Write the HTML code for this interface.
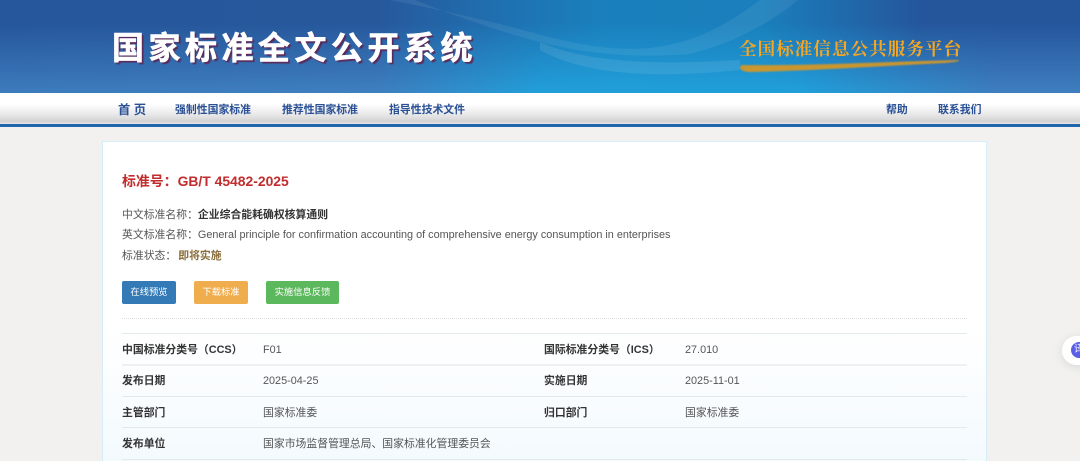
<!DOCTYPE html>
<html lang="zh"><head><meta charset="utf-8">
<style>
*{box-sizing:border-box;margin:0;padding:0}
html,body{width:1080px;height:461px;overflow:hidden;background:#f2f1ef;font-family:"Liberation Sans","Noto Sans CJK SC",sans-serif}
#wrap{position:relative;width:1080px;height:461px;overflow:hidden;background:#f2f1ef;filter:blur(.25px)}
.a{position:absolute;white-space:nowrap}
#banner{left:0;top:0;width:1080px;height:93px;overflow:hidden;background:linear-gradient(90deg,#3d7cbd 0,#3f80c0 376px,#22a0da 540px,#21a0da 800px,#3f7fc0 998px,#3f7fc0 1080px)}
#top{left:0;top:0;width:1080px;height:93px;background:linear-gradient(90deg,#26569b 0,#27589c 376px,#1f70b0 500px,#1a80bd 600px,#1a7fbc 760px,#25569c 920px,#25569c 1080px);-webkit-mask-image:linear-gradient(180deg,#000 0,#000 25%,transparent 100%);mask-image:linear-gradient(180deg,#000 0,#000 25%,transparent 100%)}
#nav{left:0;top:93px;width:1080px;height:31px;background:linear-gradient(180deg,#fff 0,#fff 35%,#e8e8e8 70%,#d2d2d2 92%,#e6e6e6 100%)}
#line{left:0;top:124px;width:1080px;height:3px;background:#1f66ac}
.n{top:102px;font-size:10.87px;line-height:16px;font-weight:bold;color:#2a5095}
#card{left:102px;top:141px;width:885px;height:340px;border:1px solid #d6ecf8;background:linear-gradient(180deg,#fff 0,#fff 55%,#f3fafe 94%)}
.t{font-size:10.85px;line-height:16px;color:#555}
.b{font-weight:bold;color:#333}
.btn{top:281px;height:23px;border-radius:2px;color:#fff;font-size:9.3px;line-height:23px;text-align:center}
.hr{left:122px;width:845px;height:1px;background:#e6e9ec}
.k{font-size:10.85px;line-height:16px;font-weight:bold;color:#333}
.v{font-size:10.85px;line-height:16px;color:#555}
</style></head><body>
<div id="wrap">
<div class="a" id="banner">
<div class="a" id="top"></div>
<svg class="a" style="left:0;top:0" width="1080" height="93" viewBox="0 0 1080 93">
<path d="M390 0H415C450 14 500 32 540 42C590 55 640 58 690 54C730 44 770 24 798 0H760C730 22 700 42 650 48C600 52 560 40 500 24C460 14 420 6 390 0Z" fill="#fff" opacity=".07"/>
<path d="M540 42C580 60 640 66 740 60V70C640 80 580 72 540 50Z" fill="#fff" opacity=".09"/>
<path d="M742 65C800 66 880 62 958 60C962 61 955 62 945 63C880 66 810 71 750 72C740 72 738 67 742 65Z" fill="#c9962f" style="filter:blur(.8px)"/>
</svg>
<div class="a" style="left:112px;top:28px;font-size:32px;line-height:40px;font-weight:bold;letter-spacing:4.5px;color:#fff;-webkit-text-stroke:.6px #fff;text-shadow:2px 2px 1px #5a2a5a">国家标准全文公开系统</div>
<div class="a" style="left:739px;top:37px;font-family:'Noto Serif CJK SC',serif;font-size:17.5px;line-height:24px;letter-spacing:1.1px;font-weight:bold;color:#f5a623">全国标准信息公共服务平台</div>
</div>
<div class="a" id="nav"></div>
<div class="a" id="line"></div>
<div class="a n" style="left:118px;font-size:12.3px;line-height:18px;top:101px">首 页</div>
<div class="a n" style="left:175px">强制性国家标准</div>
<div class="a n" style="left:282px">推荐性国家标准</div>
<div class="a n" style="left:389px">指导性技术文件</div>
<div class="a n" style="left:886px">帮助</div>
<div class="a n" style="left:938px">联系我们</div>

<div class="a" id="card"></div>
<div class="a" style="left:122px;top:171px;font-size:13.9px;line-height:20px;font-weight:bold;color:#c12c2c">标准号：GB/T 45482-2025</div>
<div class="a t" style="left:122px;top:207px">中文标准名称：<span class="b">企业综合能耗确权核算通则</span></div>
<div class="a t" style="left:122px;top:227px">英文标准名称：General principle for confirmation accounting of comprehensive energy consumption in enterprises</div>
<div class="a t" style="left:122px;top:248px">标准状态：<b style="color:#8a6d3b;margin-left:2px">即将实施</b></div>
<div class="a btn" style="left:122px;width:54px;background:#337ab7">在线预览</div>
<div class="a btn" style="left:194px;width:54px;background:#f0ad4e">下载标准</div>
<div class="a btn" style="left:266px;width:73px;background:#5cb85c">实施信息反馈</div>
<div class="a" style="left:122px;top:318px;width:845px;border-top:1px dotted #ddd"></div>

<div class="a hr" style="top:333px"></div>
<div class="a hr" style="top:364px;height:2px;background:#eef0f2"></div>
<div class="a hr" style="top:396px"></div>
<div class="a hr" style="top:427px"></div>
<div class="a hr" style="top:459px"></div>

<div class="a k" style="left:122px;top:342px">中国标准分类号（CCS）</div>
<div class="a v" style="left:263px;top:342px">F01</div>
<div class="a k" style="left:544px;top:342px">国际标准分类号（ICS）</div>
<div class="a v" style="left:685px;top:342px">27.010</div>

<div class="a k" style="left:122px;top:373px">发布日期</div>
<div class="a v" style="left:263px;top:373px">2025-04-25</div>
<div class="a k" style="left:544px;top:373px">实施日期</div>
<div class="a v" style="left:685px;top:373px">2025-11-01</div>

<div class="a k" style="left:122px;top:405px">主管部门</div>
<div class="a v" style="left:263px;top:405px">国家标准委</div>
<div class="a k" style="left:544px;top:405px">归口部门</div>
<div class="a v" style="left:685px;top:405px">国家标准委</div>

<div class="a k" style="left:122px;top:436px">发布单位</div>
<div class="a v" style="left:263px;top:436px">国家市场监督管理总局、国家标准化管理委员会</div>

<div class="a" style="left:1062px;top:336px;width:40px;height:29px;border-radius:15px;background:#fff;box-shadow:0 2px 10px rgba(0,0,0,.1)"></div>
<div class="a" style="left:1071px;top:342px;width:16px;height:16px;border-radius:8px;background:#5a5fe8;color:#fff;font-size:10px;line-height:16px;padding-left:3px;overflow:hidden">译</div>
</div>
</body></html>
